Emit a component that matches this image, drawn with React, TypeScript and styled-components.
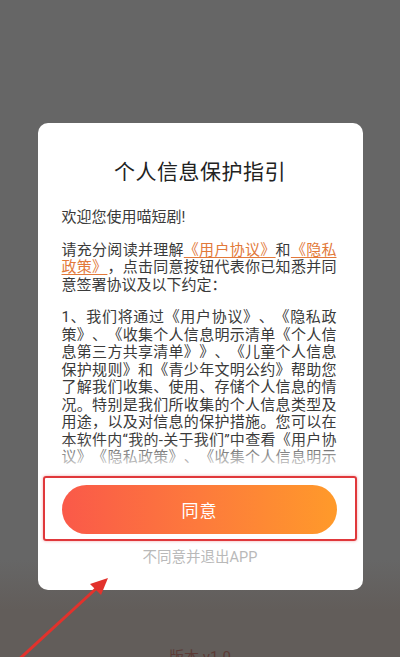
import * as React from 'react';
import styled, { createGlobalStyle } from 'styled-components';

const GlobalStyle = createGlobalStyle`
  html, body {
    margin: 0;
    padding: 0;
    height: 100%;
    overflow: hidden;
  }
  body {
    font-family: Roboto, "Noto Sans CJK SC", sans-serif;
    background: #666666;
  }
`;

const Page = styled.div`
  position: relative;
  width: 400px;
  height: 657px;
  overflow: hidden;
  display: flex;
  flex-direction: column;
  align-items: center;
  padding-top: 123px;
  box-sizing: border-box;
  background: linear-gradient(#666666 0, #666666 560px, #625d5a 610px, #625d5a 100%);
`;

const Dialog = styled.div`
  width: 325px;
  background: #ffffff;
  border-radius: 10px;
  padding: 35px 0 22px;
  box-sizing: border-box;
`;

const Title = styled.h1`
  margin: 0;
  font-size: 21px;
  line-height: 28px;
  font-weight: 400;
  letter-spacing: 0.5px;
  color: #222222;
  text-align: center;
`;

const Content = styled.div`
  position: relative;
  margin-top: 23px;
  height: 257px;
  overflow: hidden;
  padding: 0 26px 0 24px;
  text-spacing-trim: space-all;

  &::after {
    content: '';
    position: absolute;
    left: 0;
    right: 0;
    bottom: 0;
    height: 26px;
    background: linear-gradient(rgba(255, 255, 255, 0), rgba(255, 255, 255, 0.78));
  }
`;

const Para = styled.p`
  margin: 0 0 15px;
  font-size: 15px;
  line-height: 17.5px;
  color: #3a3a3a;
  text-align: justify;
`;

const Link = styled.span`
  color: #e2793a;
  text-decoration: underline;
  text-underline-offset: 2px;
`;

const Footer = styled.div`
  margin-top: 10px;
  display: flex;
  flex-direction: column;
  align-items: center;
`;

const Highlight = styled.div`
  width: 314px;
  height: 65px;
  box-sizing: border-box;
  border: 2px solid #e0383b;
  border-radius: 3px;
  box-shadow: 0 0 3px rgba(224, 56, 59, 0.45);
  display: flex;
  align-items: flex-start;
  justify-content: center;
  padding: 7px 1px 0 0;
`;

const AgreeButton = styled.button`
  width: 275px;
  height: 49px;
  border: none;
  border-radius: 25px;
  background: linear-gradient(90deg, #fa5949 0%, #fd7a3c 50%, #ff9a2a 100%);
  color: #ffffff;
  font-family: inherit;
  font-size: 17px;
  letter-spacing: 1px;
  cursor: pointer;
`;

const Decline = styled.div`
  margin-top: 7px;
  font-size: 14.5px;
  line-height: 20px;
  color: #b9b9b9;
`;

const Version = styled.div`
  margin-top: 55px;
  font-size: 15px;
  color: #5c3b36;
`;

const Arrow = styled.svg`
  position: absolute;
  left: 0;
  top: 0;
  pointer-events: none;
`;

export default function App() {
  return (
    <>
      <GlobalStyle />
      <Page>
        <Dialog>
          <Title>个人信息保护指引</Title>
          <Content>
            <Para>欢迎您使用喵短剧!</Para>
            <Para>
              请充分阅读并理解<Link>《用户协议》</Link>和<Link>《隐私政策》</Link>，点击同意按钮代表你已知悉并同意签署协议及以下约定：
            </Para>
            <Para>
              1、我们将通过《用户协议》、《隐私政策》、《收集个人信息明示清单《个人信息第三方共享清单》》、《儿童个人信息保护规则》和《青少年文明公约》帮助您了解我们收集、使用、存储个人信息的情况。特别是我们所收集的个人信息类型及用途，以及对信息的保护措施。您可以在本软件内“我的-关于我们”中查看《用户协议》《隐私政策》、《收集个人信息明示清单》等。
            </Para>
          </Content>
          <Footer>
            <Highlight>
              <AgreeButton>同意</AgreeButton>
            </Highlight>
            <Decline>不同意并退出APP</Decline>
          </Footer>
        </Dialog>
        <Version>版本 v1.0</Version>
        <Arrow width="400" height="657" viewBox="0 0 400 657">
          <line x1="14" y1="664" x2="100" y2="585" stroke="#e2322c" strokeWidth="3" />
          <polygon points="108,578 90,584 101,595" fill="#e2322c" />
        </Arrow>
      </Page>
    </>
  );
}
